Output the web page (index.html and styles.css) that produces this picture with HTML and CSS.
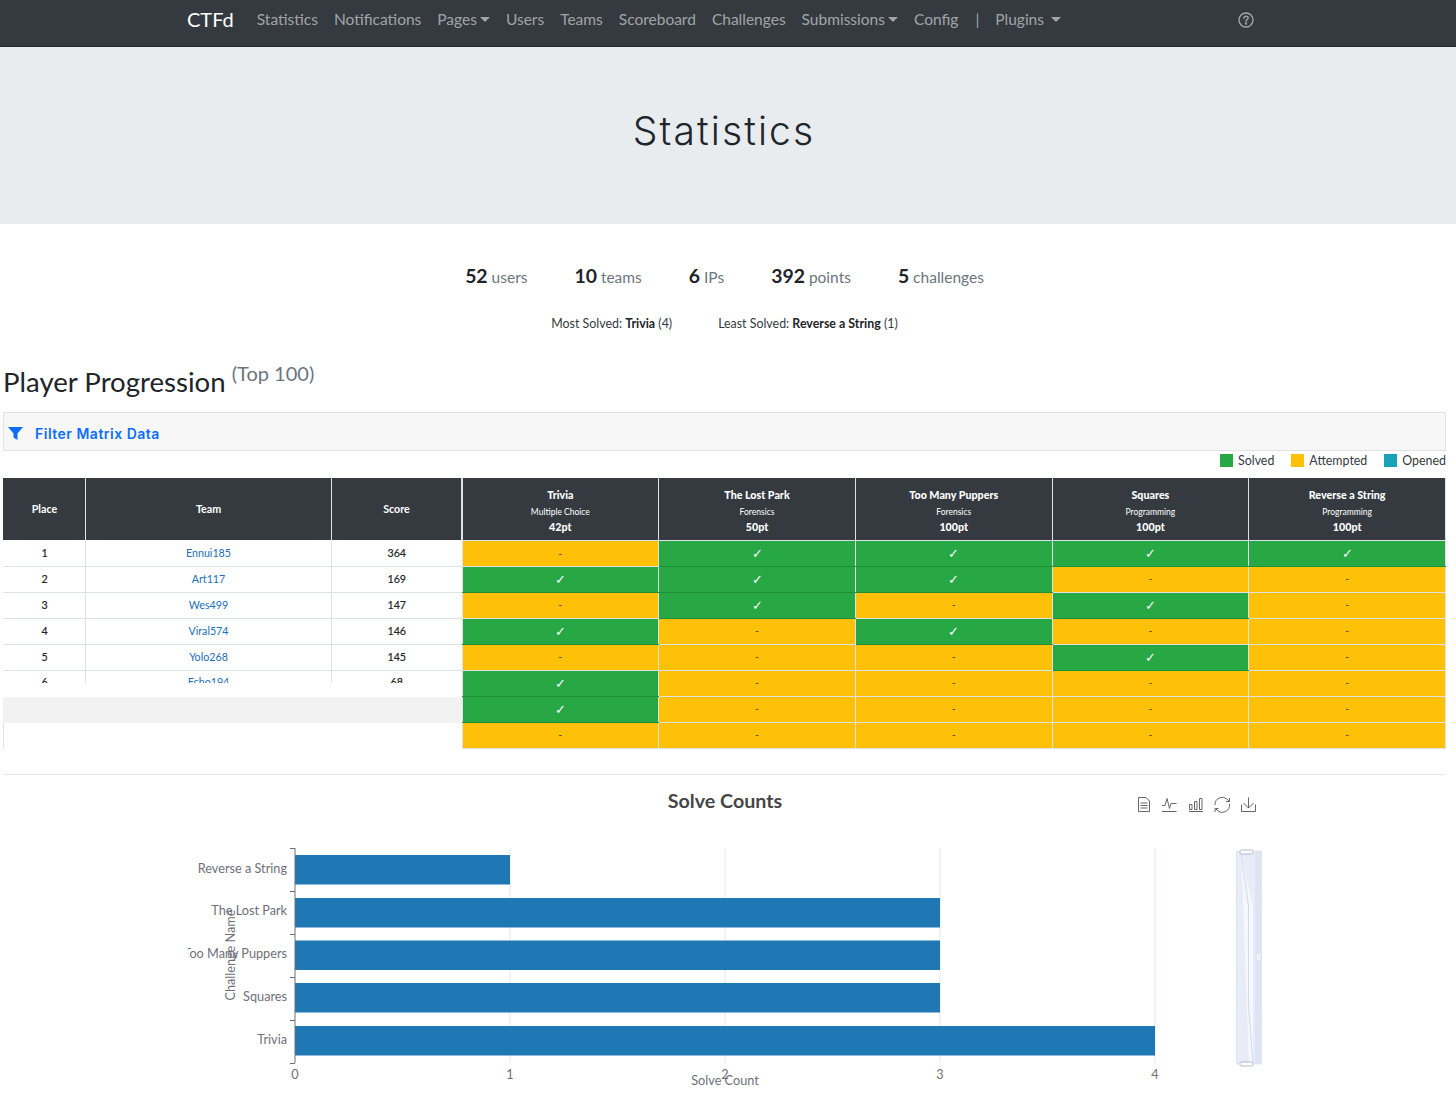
FILE: index.html
```html
<!DOCTYPE html>
<html lang="en">
<head>
<meta charset="utf-8">
<title>Statistics</title>
<link rel="stylesheet" href="styles.css">
</head>
<body>
<nav class="navbar">
  <div class="nav-inner">
    <a class="brand">CTFd</a>
    <a class="nav-link">Statistics</a>
    <a class="nav-link">Notifications</a>
    <a class="nav-link caret">Pages</a>
    <a class="nav-link">Users</a>
    <a class="nav-link">Teams</a>
    <a class="nav-link">Scoreboard</a>
    <a class="nav-link">Challenges</a>
    <a class="nav-link caret">Submissions</a>
    <a class="nav-link">Config</a>
    <span class="nav-sep">|</span>
    <a class="nav-link caret caret-wide">Plugins</a>
    <a class="nav-help">
      <svg width="16" height="16" viewBox="0 0 16 16" fill="none" stroke="#a3a6a9" stroke-width="1.4"><circle cx="8" cy="8" r="7"/><path d="M5.9 6.2c.1-1.3 1-2 2.2-2 1.200 0 2.100.8 2.100 1.900 0 1.500-2.200 1.600-2.200 3.200" stroke-linecap="round"/><circle cx="8" cy="11.500" r=".5" fill="#a3a6a9"/></svg>
    </a>
  </div>
</nav>
<header class="jumbotron"><h1>Statistics</h1></header>

<section class="stats">
  <div class="stat"><b>52</b> users</div>
  <div class="stat"><b>10</b> teams</div>
  <div class="stat"><b>6</b> IPs</div>
  <div class="stat"><b>392</b> points</div>
  <div class="stat"><b>5</b> challenges</div>
</section>
<section class="solved">
  <div>Most Solved: <b>Trivia</b> (4)</div>
  <div>Least Solved: <b>Reverse a String</b> (1)</div>
</section>

<main class="content">
  <h2 class="progress-title">Player Progression <small>(Top 100)</small></h2>
  <div class="filter">
    <svg width="15" height="13" viewBox="0 0 15 13"><path d="M0 0h15L9.500 6.500V13L5.500 10.500V6.500z" fill="#0d6efd"/></svg>
    <span>Filter Matrix Data</span>
  </div>
  <div class="legend">
    <span class="key"><i class="swatch green"></i>Solved</span>
    <span class="key"><i class="swatch yellow"></i>Attempted</span>
    <span class="key"><i class="swatch teal"></i>Opened</span>
  </div>

  <div class="matrix">
    <div class="fixed">
      <table class="left-table">
        <colgroup><col class="c-place"><col class="c-team"><col class="c-score"></colgroup>
        <thead><tr><th>Place</th><th>Team</th><th>Score</th></tr></thead>
        <tbody>
          <tr class="first"><td>1</td><td><a>Ennui185</a></td><td>364</td></tr>
          <tr><td>2</td><td><a>Art117</a></td><td>169</td></tr>
          <tr><td>3</td><td><a>Wes499</a></td><td>147</td></tr>
          <tr><td>4</td><td><a>Viral574</a></td><td>146</td></tr>
          <tr><td>5</td><td><a>Yolo268</a></td><td>145</td></tr>
          <tr class="cut"><td><div>6</div></td><td><div><a>Echo194</a></div></td><td><div>68</div></td></tr>
        </tbody>
      </table>
      <div class="gap-row"></div>
      <div class="grey-row"></div>
      <div class="blank-row"></div>
    </div>
    <table class="right-table">
      <thead>
        <tr>
          <th><b>Trivia</b><small>Multiple Choice</small><b>42pt</b></th>
          <th><b>The Lost Park</b><small>Forensics</small><b>50pt</b></th>
          <th><b>Too Many Puppers</b><small>Forensics</small><b>100pt</b></th>
          <th><b>Squares</b><small>Programming</small><b>100pt</b></th>
          <th><b>Reverse a String</b><small>Programming</small><b>100pt</b></th>
        </tr>
      </thead>
      <tbody>
        <tr class="first"><td class="a">-</td><td class="s">✓</td><td class="s">✓</td><td class="s">✓</td><td class="s">✓</td></tr>
        <tr><td class="s">✓</td><td class="s">✓</td><td class="s">✓</td><td class="a">-</td><td class="a">-</td></tr>
        <tr><td class="a">-</td><td class="s">✓</td><td class="a">-</td><td class="s">✓</td><td class="a">-</td></tr>
        <tr><td class="s">✓</td><td class="a">-</td><td class="s">✓</td><td class="a">-</td><td class="a">-</td></tr>
        <tr><td class="a">-</td><td class="a">-</td><td class="a">-</td><td class="s">✓</td><td class="a">-</td></tr>
        <tr><td class="s">✓</td><td class="a">-</td><td class="a">-</td><td class="a">-</td><td class="a">-</td></tr>
        <tr><td class="s">✓</td><td class="a">-</td><td class="a">-</td><td class="a">-</td><td class="a">-</td></tr>
        <tr><td class="a">-</td><td class="a">-</td><td class="a">-</td><td class="a">-</td><td class="a">-</td></tr>
      </tbody>
    </table>
  </div>
  <hr class="rule">
  <div class="chart-wrap">
    <svg class="chart" width="1075" height="310" viewBox="188 786 1075 310">
      <text x="725" y="808" class="chart-title" text-anchor="middle">Solve Counts</text>

      <g fill="none" stroke="#666" stroke-width="1">
        <path d="M1138.500 797.500h7.500l3.500 3.500v10.500h-11zM1140.500 803h7M1140.500 805.500h7M1140.500 808h7"/>
        <path d="M1162 811.500h14.500M1162 805.500h3l2-7 2.500 10 1.500-5h5.500"/>
        <path d="M1189 811.500h14M1189.500 804.500h2.500v5h-2.500zM1194.500 801.500h2.500v8h-2.500zM1199.500 798.500h2.500v11h-2.500z"/>
        <path d="M1215 805a7.300 7.300 0 0 1 12.500-5.500l1.500 1.500M1229.500 804a7.300 7.300 0 0 1-12.500 6l-1.500-1.500M1229.500 798v3.500h-3.500M1215 812v-3.500h3.500"/>
        <path d="M1241.500 804.500v7h14v-7M1248.500 797.500v10.500M1243.500 803l5 5 5-5"/>
      </g>

      <g stroke="#e0e6f1" stroke-width="1">
        <path d="M510 848v215M725 848v215M940 848v215M1155 848v215"/>
      </g>
      <g fill="#1f77b4">
        <rect x="295" y="855" width="215" height="29.500"/>
        <rect x="295" y="898" width="645" height="29.500"/>
        <rect x="295" y="940.500" width="645" height="29.500"/>
        <rect x="295" y="983" width="645" height="29.500"/>
        <rect x="295" y="1026" width="860" height="29.500"/>
      </g>
      <path d="M295 848v215M290 848.500h5M290 891.500h5M290 934.500h5M290 977.500h5M290 1020.500h5M290 1063.500h5" stroke="#6e7079" stroke-width="1" fill="none"/>

      <g class="axis" text-anchor="end">
        <text x="287" y="873">Reverse a String</text>
        <text x="287" y="915">The Lost Park</text>
        <text x="287" y="958">Too Many Puppers</text>
        <text x="287" y="1001">Squares</text>
        <text x="287" y="1044">Trivia</text>
      </g>
      <g class="axis" text-anchor="middle">
        <text x="295" y="1079">0</text>
        <text x="510" y="1079">1</text>
        <text x="725" y="1079">2</text>
        <text x="940" y="1079">3</text>
        <text x="1155" y="1079">4</text>
        <text x="725" y="1085">Solve Count</text>
        <text transform="translate(235 955) rotate(-90)">Challenge Name</text>
      </g>

      <rect x="1236.500" y="851" width="25" height="213" fill="#e8ecf7" stroke="#dfe5f3"/>
      <rect x="1255" y="851" width="6.500" height="213" fill="#dde4f3"/>
      <path d="M1241 852l12 55V1064h-4z" fill="#f5f7fb"/>
      <path d="M1241 852l7.500 54v100l4.500 58" fill="none" stroke="#cfdbf2"/>
      <rect x="1253" y="851" width="2" height="213" fill="#e8ecf7"/>
      <rect x="1240" y="850" width="13" height="4" rx="1.500" fill="#fff" stroke="#acb8d1"/>
      <rect x="1240" y="1062" width="13" height="4" rx="1.500" fill="#fff" stroke="#acb8d1"/>
      <path d="M1257 955h3M1257 957h3M1257 959h3" stroke="#fff"/>
    </svg>
  </div>
</main>
</body>
</html>
```
FILE: styles.css
```css
* { box-sizing: border-box; }
html, body { margin: 0; padding: 0; background: #fff; }
body { font-family: Lato, "Noto Sans", sans-serif; color: #212529; font-size: 16px; height: 1114px; overflow: hidden; }

.navbar { height: 47px; background: #343a40; border-bottom: 1px solid #26292d; }
.nav-inner { width: 1110px; margin: 0 auto; padding: 0 15px 0 14px; height: 46px; display: flex; align-items: center; position: relative; top: -4px; }
.brand { color: #fff; font-size: 20px; margin-right: 15px; }
.nav-link { color: rgba(255,255,255,.55); font-size: 15.5px; padding: 0 8px; white-space: nowrap; }
.caret::after { content: ""; display: inline-block; margin-left: 3px; vertical-align: 3px; border-top: 5px solid rgba(255,255,255,.55); border-left: 5px solid transparent; border-right: 5px solid transparent; }
.caret-wide::after { margin-left: 7px; }
.nav-sep { color: rgba(255,255,255,.55); padding: 0 8px; margin: 0 0 0 1px; font-size: 15.5px; }
.nav-help { margin-left: auto; margin-right: 14px; margin-top: 2px; display: flex; }

.jumbotron { height: 177px; background: #e9ecef; display: flex; align-items: center; justify-content: center; padding-right: 8px; }
.jumbotron h1 { margin: 0; font-family: Inter, Lato, sans-serif; font-weight: 300; font-size: 39px; letter-spacing: 2.1px; color: #212529; position: relative; top: -5px; }

.stats { display: flex; justify-content: center; gap: 47px; margin-top: 37px; height: 29px; align-items: center; color: #6c757d; font-size: 15.5px; padding-right: 7px; }
.stat b { color: #212529; font-size: 19.4px; font-weight: 700; }
.solved { display: flex; justify-content: center; gap: 46px; margin-top: 23px; font-size: 12.4px; color: #343a40; height: 20px; align-items: center; padding-right: 7px; }
.solved b { color: #212529; }

.content { padding: 0 10px 0 3px; }
.progress-title { margin: 20px 0 0 0; font-size: 27.6px; font-weight: 400; height: 40px; line-height: 40px; color: #212529; }
.progress-title small { font-size: 20px; color: #6c757d; vertical-align: 11px; margin-left: -1px; }

.filter { margin-top: 19px; height: 39px; background: #f7f7f7; border: 1px solid #e3e3e3; display: flex; align-items: center; padding: 3px 0 0 4px; gap: 12px; }
.filter span { font-family: Inter, Lato, sans-serif; color: #0d6efd; font-size: 14px; font-weight: 600; letter-spacing: .5px; }

.legend { display: flex; justify-content: flex-end; gap: 17px; height: 27px; align-items: center; font-size: 12.4px; color: #343a40; padding-bottom: 12px; padding-top: 4px; }
.key { display: flex; align-items: center; gap: 5px; }
.swatch { width: 13px; height: 13px; display: block; }
.green { background: #28a745; }
.yellow { background: #ffc107; }
.teal { background: #17a2b8; }

.matrix { display: flex; margin-top: 0; align-items: flex-start; }
.fixed { width: 458.5px; flex: none; }
table { border-collapse: collapse; table-layout: fixed; font-size: 10.7px; }
.left-table { width: 458px; }
.c-place { width: 82px; }
.c-team { width: 246px; }
.c-score { width: 130px; }
th { background: #343a40; color: #fff; font-weight: 700; height: 62px; padding: 0 0 1px; border: 1px solid #dee2e6; border-top: 0; border-bottom: 0; text-align: center; }
.left-table th:first-child { border-left-color: #343a40; }
td { height: 26px; padding: 0 0 1px; text-align: center; border: 1px solid #dee2e6; font-weight: 700; color: #212529; }
.first td { padding: 0; }
.left-table td { border-width: 1px; border-top: 0; font-weight: 400; -webkit-text-stroke: .2px #212529; }
.left-table td:first-child { border-left-color: #fff; }
.left-table td:last-child { border-right: 0; }
td a { color: #206fb5; -webkit-text-stroke: 0; }
.cut td { height: 12px; border-bottom: 0; vertical-align: top; padding: 0; }
.cut td div { height: 12px; overflow: hidden; line-height: 22px; }
.gap-row { height: 14px; }
.grey-row { height: 26px; background: #f2f2f2; }
.blank-row { height: 26px; border-left: 1px solid #e3e3e3; }

.right-table { width: 984.5px; flex: none; }
.right-table th { padding: 4px 0 0; }
.right-table th b { display: block; font-size: 10.7px; line-height: 15px; }
.right-table th small { display: block; font-size: 8.5px; font-weight: 400; line-height: 17px; margin: 2px 0 -2px; }
.right-table td { font-weight: 400; font-size: 10.7px; }
.right-table td.s { background: #28a745; color: #fff; font-size: 13px; border-bottom-color: #1f8f38; }
.right-table td.a { background: #ffc107; color: #5a4a10; }

.rule { margin: 25px 0 0 0; border: 0; border-top: 1px solid #e8e8e8; }
.chart-wrap { margin: 11px 0 0 185px; width: 1075px; height: 310px; }
.chart { display: block; }
.chart-title { font-family: Lato, sans-serif; font-size: 19.7px; font-weight: 700; fill: #464646; }
.axis text { font-family: Lato, sans-serif; font-size: 12.7px; fill: #6e7079; }
```
